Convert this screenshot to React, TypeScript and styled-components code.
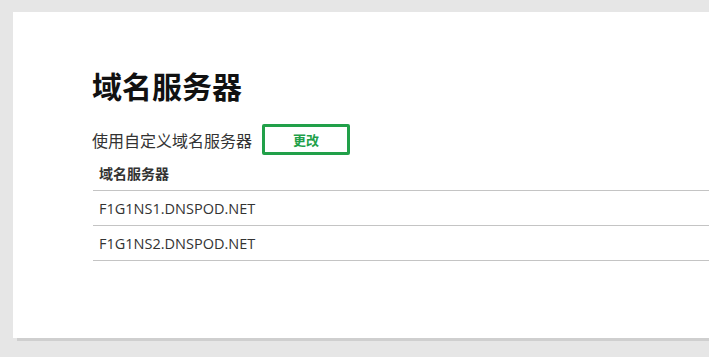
import React from 'react'
import styled, { createGlobalStyle } from 'styled-components'

const GlobalStyle = createGlobalStyle`
  html, body {
    margin: 0;
    padding: 0;
    background: #e6e6e6;
    overflow: hidden;
  }
  body {
    font-family: "Noto Sans", "Noto Sans CJK SC", sans-serif;
  }
`

const servers = ['F1G1NS1.DNSPOD.NET', 'F1G1NS2.DNSPOD.NET']

const App = () => {
  return (
    <>
      <GlobalStyle />
      <Page>
        <Card>
          <Title>域名服务器</Title>
          <Toolbar>
            <Label>使用自定义域名服务器</Label>
            <EditButton>更改</EditButton>
          </Toolbar>
          <Table>
            <thead>
              <tr>
                <HeadCell>域名服务器</HeadCell>
              </tr>
            </thead>
            <tbody>
              {servers.map((s) => (
                <tr key={s}>
                  <Cell>{s}</Cell>
                </tr>
              ))}
            </tbody>
          </Table>
        </Card>
      </Page>
    </>
  )
}

export default App

const Page = styled.div`
  width: 709px;
  height: 357px;
  padding: 12px 0 0 13px;
  box-sizing: border-box;
  overflow: hidden;
`

const Card = styled.div`
  width: 720px;
  height: 326px;
  box-sizing: border-box;
  background: #fff;
  box-shadow: 4px 3px 0 #cfcfcf;
  padding: 53px 0 0 79px;
`

const Title = styled.h1`
  margin: 0;
  font-size: 30px;
  font-weight: 700;
  line-height: 40px;
  color: #111;
  font-family: "Noto Sans CJK SC", sans-serif;
`

const Toolbar = styled.div`
  display: flex;
  align-items: center;
  gap: 10px;
  margin-top: 19px;
`

const Label = styled.span`
  font-size: 16px;
  color: #333;
  font-family: "Noto Sans CJK SC", sans-serif;
`

const EditButton = styled.button`
  width: 88px;
  height: 31px;
  box-sizing: border-box;
  background: #fff;
  border: 3px solid #21a049;
  border-radius: 2px;
  color: #21a049;
  font-size: 13px;
  font-weight: 700;
  font-family: "Noto Sans CJK SC", sans-serif;
  padding: 0;
`

const Table = styled.table`
  width: 640px;
  border-collapse: collapse;
  margin: 0 0 0 1px;
`

const HeadCell = styled.th`
  text-align: left;
  font-size: 14px;
  font-weight: 700;
  color: #333;
  height: 35px;
  padding: 0 6px;
  border-bottom: 1px solid #c4c4c4;
  font-family: "Noto Sans CJK SC", sans-serif;
`

const Cell = styled.td`
  font-size: 14.5px;
  color: #333;
  height: 34px;
  padding: 0 6px;
  border-bottom: 1px solid #c4c4c4;
  font-family: "Open Sans", "Noto Sans CJK SC", sans-serif;
`
